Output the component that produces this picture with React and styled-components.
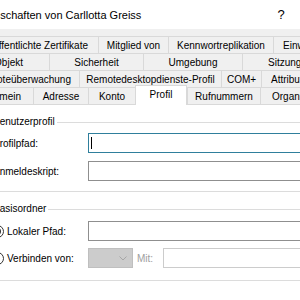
import React from "react"
import styled, { createGlobalStyle } from "styled-components"

const GlobalStyle = createGlobalStyle`
  html, body { margin: 0; padding: 0; background: #ffffff; overflow: hidden; }
  * { box-sizing: border-box; }
`

// the dialog is wider than the crop: its left part lies outside the window
const Window = styled.div`
  width: 390px;
  height: 300px;
  margin-left: -40px;
  display: flex;
  flex-direction: column;
  background: #f0f0f0;
  font-family: "Liberation Sans", Arial, sans-serif;
  font-size: 10px;
  color: #000;
  overflow: hidden;
`

const TitleBar = styled.div`
  height: 29px;
  flex: none;
  display: flex;
  align-items: center;
  background: #ffffff;
  padding-left: 12px;
  font-size: 11px;
`

const Title = styled.div`
  flex: 1;
  white-space: nowrap;
`

const TitleButton = styled.div`
  width: 46px;
  height: 29px;
  display: flex;
  align-items: center;
  justify-content: center;
  font-size: ${(p) => p.$size || 12}px;
`

const TabStrip = styled.div`
  margin-top: 7px;
  display: flex;
  flex-direction: column;
`

const TabRow = styled.div`
  display: flex;
  height: 17px;
`

const Tab = styled.div`
  flex: ${(p) => (p.$w ? "none" : "1")};
  width: ${(p) => (p.$w ? `${p.$w}px` : "auto")};
  display: flex;
  align-items: center;
  justify-content: ${(p) => p.$align || "center"};
  padding: 0 ${(p) => p.$pr || 0}px 0 ${(p) => p.$pl || 0}px;
  border-top: 1px solid #d9d9d9;
  border-left: 1px solid #d9d9d9;
  background: #f0f0f0;
  white-space: nowrap;
  overflow: hidden;
`

const ActiveTab = styled(Tab)`
  position: relative;
  z-index: 1;
  height: 20px;
  margin-top: -2px;
  margin-bottom: -1px;
  padding-bottom: 2px;
  border-right: 1px solid #d9d9d9;
  background: #ffffff;
`

const Panel = styled.div`
  flex: 1;
  background: #ffffff;
  border-top: 1px solid #d9d9d9;
  padding: 0 0 0 22px;
`

const Group = styled.fieldset`
  margin: ${(p) => p.$top}px 0 0 0;
  padding: ${(p) => p.$pt}px 10px ${(p) => p.$pb}px 10px;
  border: 1px solid #dcdcdc;
  border-radius: 0;
  min-width: 0;
  display: grid;
  grid-template-columns: 95px 1fr;
  row-gap: ${(p) => p.$gap}px;
  align-items: center;
`

const Legend = styled.legend`
  margin-left: -2px;
  padding: 0 2px;
  line-height: 12px;
`

const Label = styled.div`
  white-space: nowrap;
  display: flex;
  align-items: center;
  gap: 3px;
`

const Radio = styled.span`
  width: 13px;
  height: 13px;
  margin-left: -2px;
  border-radius: 50%;
  border: 1px solid #333333;
  background: #ffffff;
  display: flex;
  align-items: center;
  justify-content: center;
  &::after {
    content: "";
    width: 7px;
    height: 7px;
    border-radius: 50%;
    background: ${(p) => (p.$checked ? "#333333" : "transparent")};
  }
`

const TextBox = styled.div`
  height: 20px;
  min-width: 0;
  flex: 1;
  display: flex;
  align-items: center;
  padding-left: 2px;
  background: #ffffff;
  border: 1px solid ${(p) => (p.$focused ? "#2f7f9c" : p.$disabled ? "#cccccc" : "#8f8f8f")};
`

const Caret = styled.span`
  width: 1px;
  height: 12px;
  background: #000;
`

const Inline = styled.div`
  display: flex;
  align-items: center;
`

const Combo = styled.div`
  width: 45px;
  height: 20px;
  display: flex;
  align-items: center;
  justify-content: flex-end;
  padding-right: 5px;
  background: #cccccc;
  border: 1px solid #bfbfbf;
`

const DimLabel = styled.span`
  width: 30px;
  padding-left: 4px;
  color: #a0a0a0;
`

const rows = [
  [
    { t: "Veröffentlichte Zertifikate", w: 138, align: "flex-end", pr: 10 },
    { t: "Mitglied von", w: 70 },
    { t: "Kennwortreplikation", w: 105 },
    { t: "Einwählen", align: "flex-start", pl: 9 },
  ],
  [
    { t: "Objekt", w: 89, align: "flex-end", pr: 26 },
    { t: "Sicherheit", w: 94 },
    { t: "Umgebung", w: 99 },
    { t: "Sitzungen", align: "flex-start", pl: 25 },
  ],
  [
    { t: "Remoteüberwachung", w: 119, align: "flex-end", pr: 8 },
    { t: "Remotedesktopdienste-Profil", w: 142 },
    { t: "COM+", w: 40 },
    { t: "Attribut-Editor", align: "flex-start", pl: 9 },
  ],
  [
    { t: "Allgemein", w: 73, align: "flex-end", pr: 12 },
    { t: "Adresse", w: 55 },
    { t: "Konto", w: 47 },
    { t: "Profil", w: 52, active: true },
    { t: "Rufnummern", w: 73 },
    { t: "Organisation", align: "flex-start", pl: 11 },
  ],
]

const Chevron = () => (
  <svg width="8" height="5" viewBox="0 0 8 5">
    <polyline points="0.5,0.5 4,4 7.5,0.5" fill="none" stroke="#a6a6a6" strokeWidth="1" />
  </svg>
)

export default function App() {
  return (
    <>
      <GlobalStyle />
      <Window>
        <TitleBar>
          <Title>Eigenschaften von Carllotta Greiss</Title>
          <TitleButton $size={13}>?</TitleButton>
          <TitleButton>✕</TitleButton>
        </TitleBar>
        <TabStrip>
          {rows.map((row, i) => (
            <TabRow key={i}>
              {row.map((tab) => {
                const Comp = tab.active ? ActiveTab : Tab
                return (
                  <Comp key={tab.t} $w={tab.w} $align={tab.align} $pr={tab.pr} $pl={tab.pl}>
                    {tab.t}
                  </Comp>
                )
              })}
            </TabRow>
          ))}
        </TabStrip>
        <Panel>
          <Group $top={11} $pt={5} $pb={10} $gap={8}>
            <Legend>Benutzerprofil</Legend>
            <Label>Profilpfad:</Label>
            <TextBox $focused>
              <Caret />
            </TextBox>
            <Label>Anmeldeskript:</Label>
            <TextBox />
          </Group>
          <Group $top={11} $pt={6} $pb={12} $gap={7}>
            <Legend>Basisordner</Legend>
            <Label>
              <Radio $checked />
              Lokaler Pfad:
            </Label>
            <TextBox />
            <Label>
              <Radio />
              Verbinden von:
            </Label>
            <Inline>
              <Combo>
                <Chevron />
              </Combo>
              <DimLabel>Mit:</DimLabel>
              <TextBox $disabled />
            </Inline>
          </Group>
        </Panel>
      </Window>
    </>
  )
}
